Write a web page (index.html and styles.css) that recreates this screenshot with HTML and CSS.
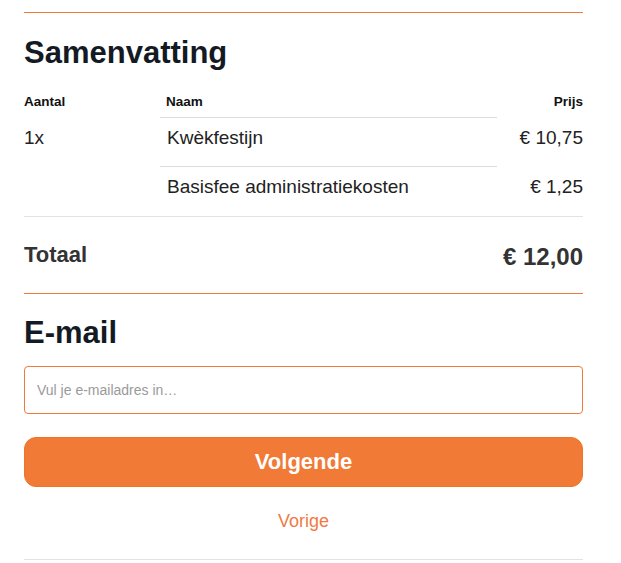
FILE: index.html
```html
<!DOCTYPE html>
<html lang="nl">
<head>
<meta charset="utf-8">
<title>Samenvatting</title>
<link rel="stylesheet" href="styles.css">
</head>
<body>
<main class="checkout">
  <section class="summary">
    <h2 class="section-title summary-title">Samenvatting</h2>
    <table class="order-table">
      <colgroup>
        <col class="col-qty">
        <col class="col-name">
        <col class="col-price">
      </colgroup>
      <thead>
        <tr>
          <th class="th-qty">Aantal</th>
          <th class="th-name">Naam</th>
          <th class="th-price">Prijs</th>
        </tr>
      </thead>
      <tbody>
        <tr>
          <td class="qty">1x</td>
          <td class="name">Kwèkfestijn</td>
          <td class="price">€ 10,75</td>
        </tr>
        <tr class="last-row">
          <td class="qty"></td>
          <td class="name">Basisfee administratiekosten</td>
          <td class="price">€ 1,25</td>
        </tr>
      </tbody>
    </table>
    <div class="total">
      <span class="total-label">Totaal</span>
      <span class="total-amount">€ 12,00</span>
    </div>
  </section>
  <section class="email">
    <h2 class="section-title email-title">E-mail</h2>
    <input class="email-input" type="email" placeholder="Vul je e-mailadres in…">
    <button class="btn-next" type="button">Volgende</button>
    <a class="link-prev" href="#">Vorige</a>
  </section>
</main>
</body>
</html>
```
FILE: styles.css
```css
html, body {
  margin: 0;
  padding: 0;
  background: #ffffff;
}

body {
  font-family: "Liberation Sans", Arial, sans-serif;
  color: #222222;
}

.checkout {
  width: 559px;
  margin: 12px 0 0 24px;
}

.summary {
  border-top: 1px solid #f07a3a;
}

.section-title {
  font-size: 31px;
  line-height: 36px;
  font-weight: 700;
  color: #141a24;
}

.summary-title {
  margin: 22px 0 17px;
}

.order-table {
  width: 559px;
  border-collapse: collapse;
  table-layout: fixed;
}

.col-qty { width: 136px; }
.col-name { width: 337px; }
.col-price { width: 86px; }

.order-table th {
  font-size: 13.5px;
  line-height: 16px;
  font-weight: 700;
  color: #111111;
  padding: 6px 0 7px;
  text-align: left;
}

.order-table th.th-name {
  padding-left: 6px;
}

.order-table th.th-price {
  text-align: right;
}

.order-table td {
  font-size: 19px;
  line-height: 24px;
  color: #222222;
  padding: 8px 0 16px;
  vertical-align: top;
}

.order-table td.name {
  border-top: 1px solid #dddddd;
  padding-left: 7px;
}

.order-table td.price {
  text-align: right;
}

.order-table .last-row td {
  padding-bottom: 17px;
}

.total {
  display: flex;
  justify-content: space-between;
  align-items: flex-start;
  border-top: 1px solid #e3e3e3;
  padding: 24px 0 16px;
  color: #333333;
  font-weight: 700;
}

.total-label {
  font-size: 22px;
  line-height: 28px;
}

.total-amount {
  font-size: 24px;
  line-height: 32px;
  padding-bottom: 4px;
}

.email {
  display: flex;
  flex-direction: column;
  border-top: 1px solid #f07a3a;
  border-bottom: 1px solid #e3e3e3;
  padding-bottom: 26px;
}

.email-title {
  margin: 21px 0 15px;
}

.email-input {
  box-sizing: border-box;
  width: 100%;
  height: 48px;
  margin: 0;
  padding: 0 12px;
  border: 1px solid #f07a3a;
  border-radius: 4px;
  font-family: "Liberation Sans", Arial, sans-serif;
  font-size: 14px;
  color: #222222;
  outline: none;
}

.email-input::placeholder {
  color: #9a9a9a;
}

.btn-next {
  box-sizing: border-box;
  width: 100%;
  height: 50px;
  margin: 23px 0 0;
  border: 1px solid #ef7426;
  border-radius: 12px;
  background: #f07a36;
  color: #ffffff;
  font-family: "Liberation Sans", Arial, sans-serif;
  font-size: 22px;
  font-weight: 700;
  cursor: pointer;
}

.link-prev {
  align-self: center;
  margin-top: 22px;
  font-size: 18px;
  line-height: 24px;
  color: #f07a45;
  text-decoration: none;
}
```
